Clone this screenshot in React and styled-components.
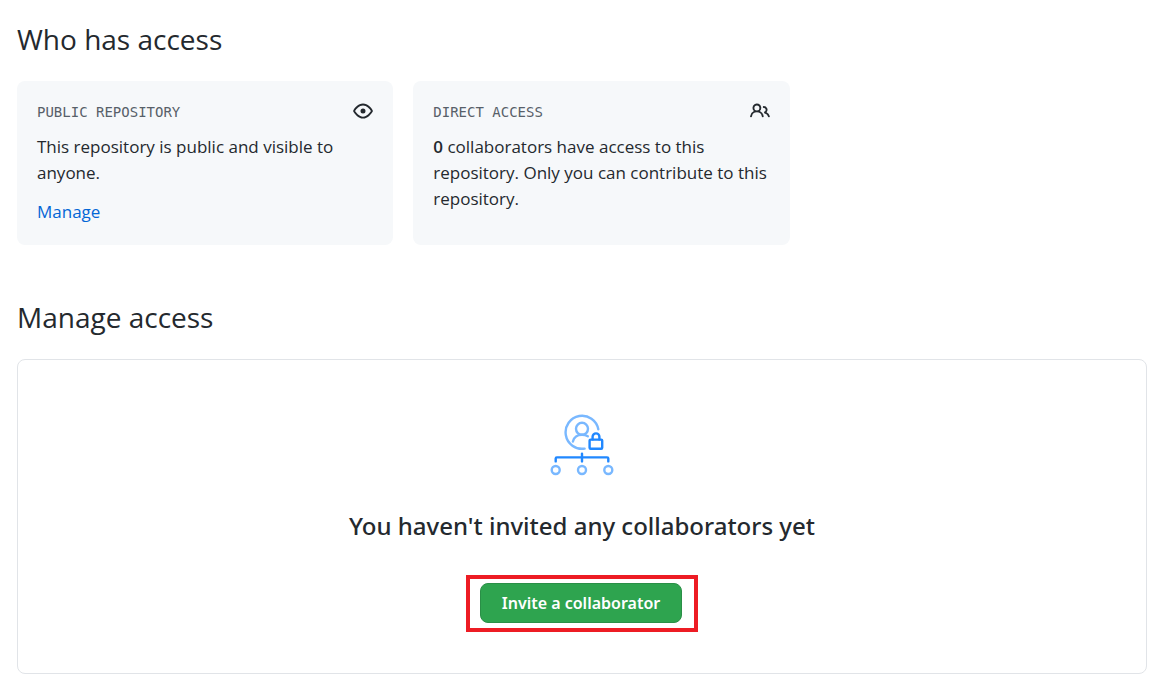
import React from "react";
import styled, { createGlobalStyle } from "styled-components";

const GlobalStyle = createGlobalStyle`
  *, *::before, *::after { box-sizing: border-box; }
  body {
    margin: 0;
    background: #ffffff;
    color: #24292e;
    font-family: "Segoe UI", "Open Sans", "Noto Sans", sans-serif;
    font-size: 17px;
    line-height: 26px;
  }
`;

const Page = styled.main`
  padding: 20px 10px 23px 17px;
`;

const Section = styled.section`
  & + & { margin-top: 53px; }
`;

const SectionTitle = styled.h2`
  margin: 0 0 23px;
  font-size: 28px;
  line-height: 38px;
  font-weight: 400;
`;

const CardRow = styled.div`
  display: flex;
  gap: 20px;
`;

const Card = styled.article`
  flex: 0 0 33.3%;
  min-height: 164px;
  padding: 20px;
  border-radius: 8px;
  background: #f6f8fa;
`;

const CardHeader = styled.header`
  display: flex;
  align-items: flex-start;
  justify-content: space-between;
  margin-bottom: 11px;
`;

const CardLabel = styled.h3`
  margin: 0;
  color: #586069;
  font-family: "DejaVu Sans Mono", monospace;
  font-size: 14px;
  line-height: 22px;
  font-weight: 400;
  text-transform: uppercase;
`;

const CardText = styled.p`
  margin: 0;
`;

const Strong = styled.strong`
  font-weight: 600;
`;

const CardLink = styled.a`
  display: inline-block;
  margin-top: 13px;
  color: #0366d6;
  text-decoration: none;
`;

const CardIcon = styled.svg`
  width: 20px;
  height: 20px;
  fill: currentColor;
`;

const EmptyState = styled.div`
  display: flex;
  flex-direction: column;
  align-items: center;
  padding: 54px 20px 41px;
  border: 1px solid #e1e4e8;
  border-radius: 8px;
  font-family: "Segoe UI", "Noto Sans", sans-serif;
`;

const Illustration = styled.svg`
  width: 64px;
  height: 62px;
  fill: none;
  stroke-width: 2.4;
  stroke-linecap: round;
  stroke-linejoin: round;
`;

const EmptyTitle = styled.h3`
  margin: 34px 0 33px;
  font-size: 24px;
  line-height: 32px;
  font-weight: 500;
`;

const Highlight = styled.div`
  padding: 4px 12px 5px 10px;
  border: 4px solid #ed1c24;
`;

const PrimaryButton = styled.button`
  display: block;
  height: 40px;
  padding: 0 21px;
  border: 1px solid #2a8f47;
  border-radius: 8px;
  background: #2ea44f;
  color: #ffffff;
  font: inherit;
  font-size: 16px;
  font-weight: 600;
  cursor: pointer;
`;

const EyeIcon = () => (
  <CardIcon viewBox="0 0 16 16" aria-hidden="true">
    <path
      fillRule="evenodd"
      d="M1.679 7.932c.412-.621 1.242-1.75 2.366-2.717C5.175 4.242 6.527 3.5 8 3.5c1.473 0 2.824.742 3.955 1.715 1.124.967 1.954 2.096 2.366 2.717a.119.119 0 010 .136c-.412.621-1.242 1.75-2.366 2.717C10.825 11.758 9.473 12.5 8 12.5c-1.473 0-2.824-.742-3.955-1.715C2.92 9.818 2.09 8.69 1.679 8.068a.119.119 0 010-.136zM8 2c-1.981 0-3.67.992-4.933 2.078C1.797 5.169.88 6.423.43 7.1a1.619 1.619 0 000 1.798c.45.678 1.367 1.932 2.637 3.024C4.329 13.008 6.019 14 8 14c1.981 0 3.67-.992 4.933-2.078 1.27-1.091 2.187-2.345 2.637-3.023a1.619 1.619 0 000-1.798c-.45-.678-1.367-1.932-2.637-3.023C11.671 2.992 9.981 2 8 2zm0 8a2 2 0 100-4 2 2 0 000 4z"
    />
  </CardIcon>
);

const PeopleIcon = () => (
  <CardIcon viewBox="0 0 16 16" aria-hidden="true">
    <path
      fillRule="evenodd"
      d="M5.5 3.5a2 2 0 100 4 2 2 0 000-4zM2 5.5a3.5 3.5 0 115.898 2.549 5.507 5.507 0 013.034 4.084.75.75 0 11-1.482.235 4.001 4.001 0 00-7.9 0 .75.75 0 01-1.482-.236A5.507 5.507 0 013.102 8.05 3.49 3.49 0 012 5.5zM11 4a.75.75 0 100 1.5 1.5 1.5 0 01.666 2.844.75.75 0 00-.416.672v.352a.75.75 0 00.574.73c1.2.289 2.162 1.2 2.522 2.372a.75.75 0 101.434-.44 5.01 5.01 0 00-2.56-3.012A3 3 0 0011 4z"
    />
  </CardIcon>
);

const AccessIllustration = () => (
  <Illustration viewBox="0 0 64 62" aria-hidden="true">
    <g stroke="#79b8ff">
      <path d="M48.3 15.2A16.5 16.5 0 1 0 34.6 34.6" />
      <circle cx="32" cy="14.8" r="6" />
      <path d="M22.9 27.5c.9-4.2 4.7-6.7 9.1-6.7 2.2 0 4.2.5 5.8 1.5" />
      <circle cx="5.7" cy="56" r="4" />
      <circle cx="32" cy="56" r="4" />
      <circle cx="58.3" cy="56" r="4" />
    </g>
    <g stroke="#2188ff">
      <rect x="39.6" y="25.6" width="12.6" height="9.2" rx="1" />
      <path d="M42.6 25.4v-2.6a3.4 3.4 0 0 1 6.8 0v2.6" />
      <path d="M5.7 47.4V44.6a1.2 1.2 0 0 1 1.2-1.2h50.2a1.2 1.2 0 0 1 1.2 1.2v2.8M32 39.6v7.8" />
    </g>
  </Illustration>
);

export default function App() {
  return (
    <>
      <GlobalStyle />
      <Page>
        <Section>
          <SectionTitle>Who has access</SectionTitle>
          <CardRow>
            <Card>
              <CardHeader>
                <CardLabel>Public repository</CardLabel>
                <EyeIcon />
              </CardHeader>
              <CardText>This repository is public and visible to anyone.</CardText>
              <CardLink href="#manage">Manage</CardLink>
            </Card>
            <Card>
              <CardHeader>
                <CardLabel>Direct access</CardLabel>
                <PeopleIcon />
              </CardHeader>
              <CardText>
                <Strong>0</Strong> collaborators have access to this repository. Only you can
                contribute to this repository.
              </CardText>
            </Card>
          </CardRow>
        </Section>
        <Section id="manage">
          <SectionTitle>Manage access</SectionTitle>
          <EmptyState>
            <AccessIllustration />
            <EmptyTitle>You haven't invited any collaborators yet</EmptyTitle>
            <Highlight>
              <PrimaryButton type="button">Invite a collaborator</PrimaryButton>
            </Highlight>
          </EmptyState>
        </Section>
      </Page>
    </>
  );
}
